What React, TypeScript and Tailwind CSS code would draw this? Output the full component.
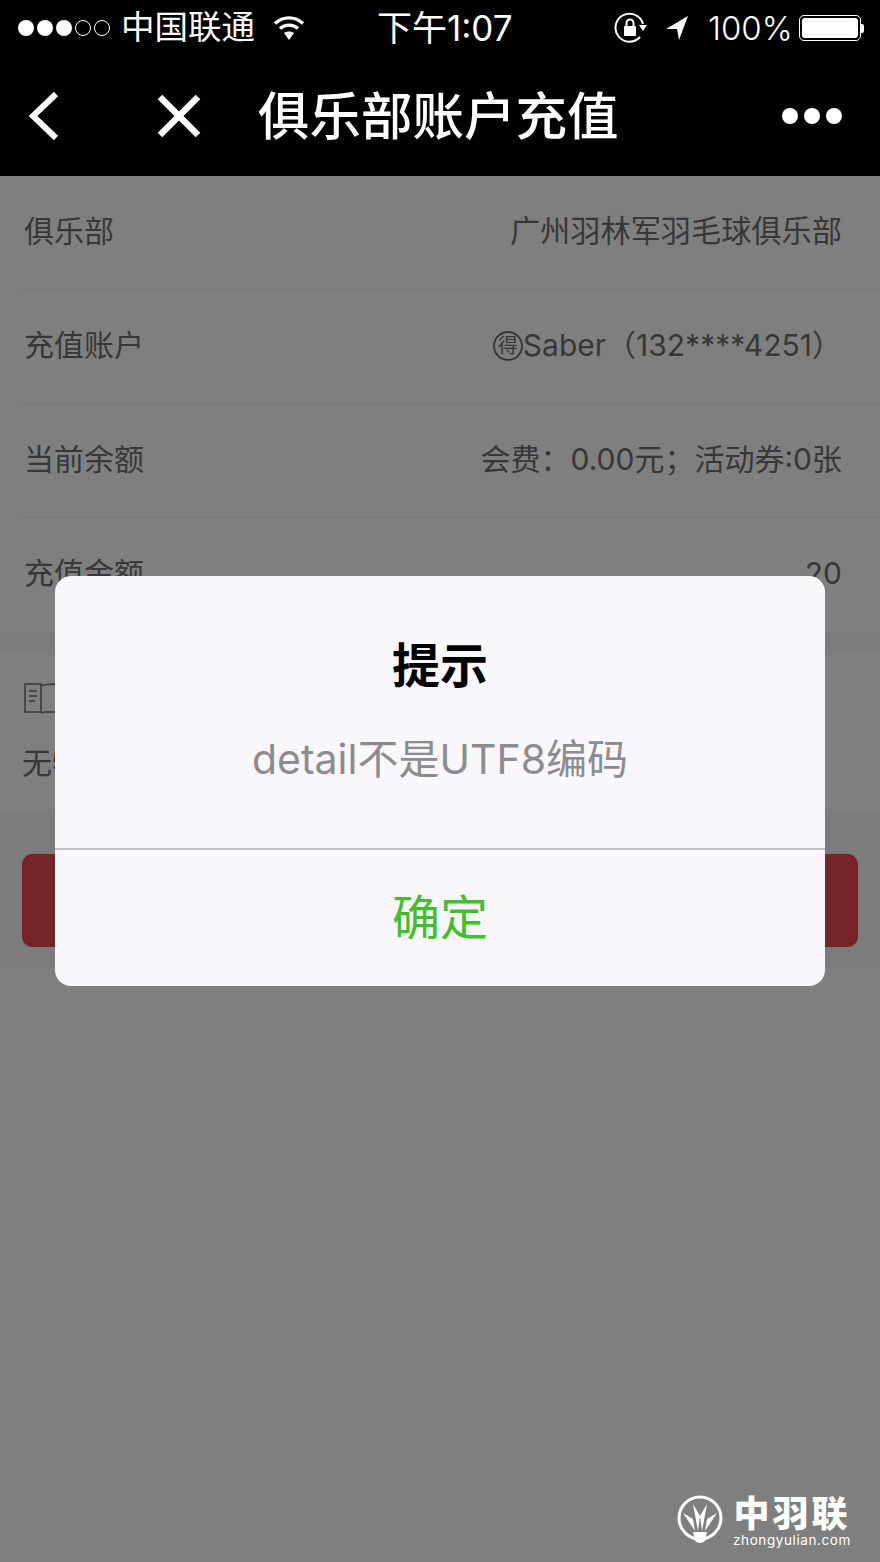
import React from "react";

const cjk = { fontFamily: 'Inter,"Noto Sans CJK SC",sans-serif' };

function Row({ label, children, border = true }: { label: string; children: React.ReactNode; border?: boolean }) {
  return (
    <div className="relative flex h-[114px] items-center justify-between pl-6 pr-[38px] text-[30px] text-[#6f6f6f]">
      <span className="pb-[3px]">{label}</span>
      <span className="pb-[3px]">{children}</span>
      {border && <div className="absolute bottom-0 left-[22px] right-0 h-px bg-[#f0f0f0]" />}
    </div>
  );
}

function StatusBar() {
  return (
    <div className="flex h-[56px] items-center bg-black text-white">
      <div className="ml-[18px] flex items-center gap-[3px]">
        {[0, 1, 2].map((i) => (
          <span key={i} className="h-[16px] w-[16px] rounded-full bg-white" />
        ))}
        {[0, 1].map((i) => (
          <span key={i} className="h-[16px] w-[16px] rounded-full border border-white" />
        ))}
      </div>
      <span className="ml-[11px] w-[136px] text-[33.5px] leading-none whitespace-nowrap">中国联通</span>
      <svg width="32" height="28" viewBox="0 0 32 28" className="ml-[16px]">
        <path d="M2 9.5C10 2 22 2 30 9.5" stroke="#fff" strokeWidth="3.4" fill="none" />
        <path d="M7 14.5C12 10 20 10 25 14.5" stroke="#fff" strokeWidth="3.4" fill="none" />
        <path d="M11 19C14 17 18 17 21 19L16 26Z" fill="#fff" />
      </svg>
      <span className="ml-[72px] w-[136px] text-[35px] leading-none whitespace-nowrap">下午1:07</span>
      <svg width="34" height="34" viewBox="0 0 34 34" className="ml-[101px]">
        <path d="M26 26A14 14 0 1 1 29 13" stroke="#fff" strokeWidth="2" fill="none" />
        <path d="M25 14H33L29 20Z" fill="#fff" />
        <rect x="10" y="15" width="12" height="10" rx="1" fill="#fff" />
        <path d="M12.5 15V12A3.5 3.5 0 0 1 19.5 12V15" stroke="#fff" strokeWidth="2" fill="none" />
      </svg>
      <svg width="28" height="30" viewBox="0 0 28 30" className="ml-[15px]">
        <path d="M25 3L3 16H14L16 27Z" fill="#fff" />
      </svg>
      <span className="ml-[17px] w-[84px] text-[33px] leading-none font-light whitespace-nowrap">100%</span>
      <div className="ml-[7px] flex items-center">
        <div className="h-[26px] w-[62px] rounded-[5px] border border-white p-[2px]">
          <div className="h-full w-full rounded-[3px] bg-white" />
        </div>
        <div className="h-[9px] w-[3px] rounded-r-[2px] bg-white" />
      </div>
    </div>
  );
}

function NavBar() {
  return (
    <div className="flex h-[120px] items-center bg-black text-white">
      <svg width="32" height="50" viewBox="0 0 32 50" className="ml-[28px]">
        <path d="M28 3L5 25L28 47" stroke="#fff" strokeWidth="6" fill="none" />
      </svg>
      <svg width="44" height="44" viewBox="0 0 44 44" className="ml-[97px]">
        <path d="M3 3L41 41M41 3L3 41" stroke="#fff" strokeWidth="6.5" fill="none" />
      </svg>
      <span className="ml-[57px] w-[361px] pt-[1px] text-[51.5px] leading-none font-medium whitespace-nowrap">俱乐部账户充值</span>
      <div className="ml-[163px] flex gap-[6px]">
        <span className="h-[16px] w-[16px] rounded-full bg-white" />
        <span className="h-[16px] w-[16px] rounded-full bg-white" />
        <span className="h-[16px] w-[16px] rounded-full bg-white" />
      </div>
    </div>
  );
}

function Logo() {
  return (
    <div className="absolute right-[29px] bottom-[14px] flex items-center gap-[10px] text-white">
      <svg width="46" height="52" viewBox="0 0 46 52">
        <circle cx="23" cy="24" r="21" stroke="#fff" strokeWidth="3" fill="none" />
        <path d="M16 38H30L28 47Q23 51 18 47Z" fill="#fff" />
        <path d="M21 37L16 10L23 22Z M25 37L30 10L23 22Z M18 37L6 19L16 25Z M28 37L40 19L30 25Z" fill="#fff" />
      </svg>
      <div className="flex flex-col items-center">
        <span className="pt-[4px] text-[36px] leading-[36px] font-black tracking-[3px] whitespace-nowrap">中羽联</span>
        <span className="mt-[1px] text-[13.5px] leading-[15px] tracking-[0.6px] whitespace-nowrap">zhongyulian.com</span>
      </div>
    </div>
  );
}

export default function App() {
  return (
    <div className="relative h-[1562px] w-[880px] overflow-hidden bg-[#ffffff]" style={cjk}>
      <div className="flex h-full flex-col">
        <div className="h-[176px]" />
        <Row label="俱乐部"><span className="text-[30.2px]">广州羽林军羽毛球俱乐部</span></Row>
        <Row label="充值账户">
          <span className="mb-[3px] inline-flex items-center">
            <span className="inline-flex h-[30px] w-[30px] items-center justify-center rounded-full border-2 border-[#6f6f6f] text-[20px] leading-none">得</span>
            Saber（132****4251）
          </span>
        </Row>
        <Row label="当前余额">会费：0.00元；活动券:0张</Row>
        <Row label="充值金额" border={false}>20</Row>
        <div className="h-[22px] bg-[#f8f8f8]" />
        <div className="flex h-[156px] flex-col pl-[24px] text-[30px] text-[#6f6f6f]">
          <svg width="34" height="32" viewBox="0 0 34 32" className="mt-[28px]" fill="none" stroke="#6f6f6f" strokeWidth="1.5">
            <path d="M1 2H17V30H1Z M17 4C20 2 28 2 33 2V30H20L17 31" />
            <path d="M5 9H13M5 14H13M5 19H11" />
          </svg>
          <span className="mt-[27px] -ml-[2px]">无特殊说明</span>
        </div>
        <div className="h-[158px] bg-[#f8f8f8] px-[22px] pt-[44px]">
          <div className="h-[93px] rounded-[10px] border border-[#e04550] bg-[#ec4652]" />
        </div>
      </div>

      <div className="absolute inset-0 bg-black/50" />

      <div className="absolute top-0 right-0 left-0">
        <StatusBar />
        <NavBar />
      </div>

      <div className="absolute top-[576px] left-[55px] flex h-[410px] w-[770px] flex-col rounded-[16px] bg-[#f9f7fb]">
        <div className="flex h-[274px] flex-col items-center border-b-2 border-[#c2c1c4]">
          <span className="mt-[66px] text-[48px] leading-none font-semibold text-black">提示</span>
          <span className="mt-[49px] text-[41px] leading-none text-[#8c8c90]">detail不是UTF8编码</span>
        </div>
        <div className="flex flex-1 items-center justify-center text-[48px] leading-none text-[#3fbf2c]">确定</div>
      </div>

      <Logo />
    </div>
  );
}
